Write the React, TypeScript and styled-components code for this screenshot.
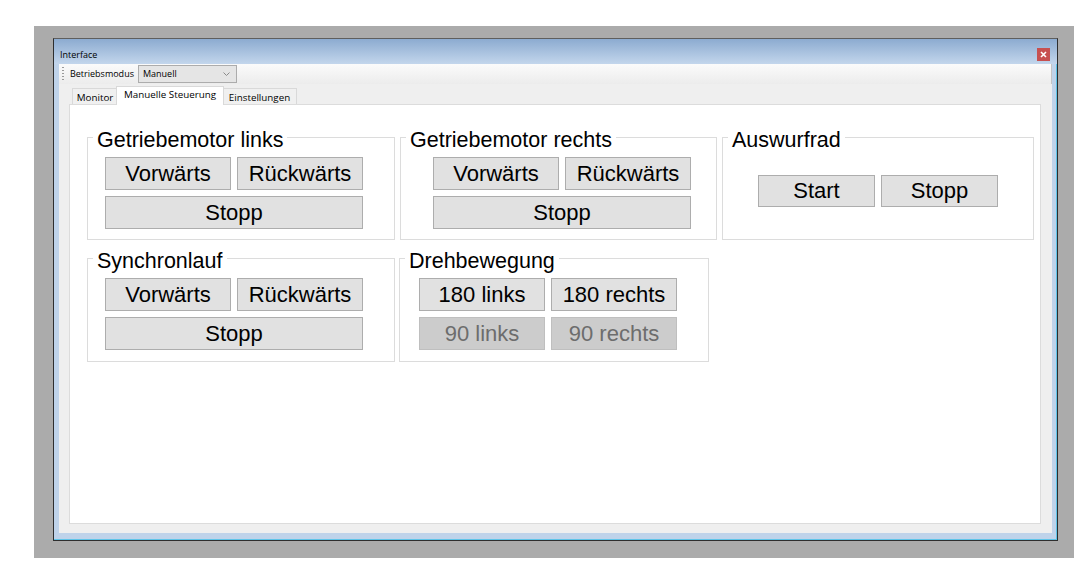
import React from "react";
import styled, { createGlobalStyle } from "styled-components";

const GlobalStyle = createGlobalStyle`
  html, body { margin: 0; padding: 0; background: #ffffff; }
  body { font-family: "Liberation Sans", Arial, sans-serif; }
  *, *::before, *::after { box-sizing: border-box; }
`;

const Stage = styled.div`
  margin: 26px 0 0 34px;
  width: 1040px;
  height: 532px;
  background: #ababab;
  padding: 12px 0 0 19px;
`;

const Window = styled.div`
  width: 1005px;
  height: 503px;
  border: 1px solid #2e2e2e;
  border-top-color: #5e5e5e;
  display: flex;
  flex-direction: column;
  background: #bfd3ea;
  box-shadow: inset -1px -1px 0 #5ec4e8;
`;

const TitleBar = styled.div`
  flex: none;
  height: 25px;
  display: flex;
  justify-content: space-between;
  align-items: flex-start;
  padding: 0 7px 0 6px;
  background: linear-gradient(#8cabd0, #c3d6ec);
`;

const TitleText = styled.span`
  margin-top: 10px;
  font-family: "Open Sans", "Liberation Sans", sans-serif;
  font-size: 9px;
  line-height: 12px;
  color: #000;
`;

const CloseBox = styled.div`
  margin-top: 9px;
  width: 13px;
  height: 13px;
  background: #c75050;
  display: flex;
  align-items: center;
  justify-content: center;
`;

const Frame = styled.div`
  flex: 1;
  display: flex;
  padding: 0 5px 7px 5px;
`;

const Client = styled.div`
  flex: 1;
  display: flex;
  flex-direction: column;
  background: #efefef;
`;

const Toolbar = styled.div`
  flex: none;
  height: 20px;
  display: flex;
  align-items: center;
  background: linear-gradient(#fbfbfb, #ececec);
  border-right: 1px solid #c4c4c4;
  font-family: "Open Sans", "Liberation Sans", sans-serif;
  font-size: 9px;
  color: #000;
`;

const Grip = styled.div`
  width: 2px;
  height: 14px;
  margin-left: 3px;
  background: repeating-linear-gradient(to bottom, #9a9a9a 0 1px, transparent 1px 3px);
`;

const ToolLabel = styled.span`
  margin-left: 6px;
  line-height: 12px;
`;

const Combo = styled.div`
  margin-left: 4px;
  width: 99px;
  height: 18px;
  background: #e5e5e5;
  border: 1px solid #acacac;
  display: flex;
  align-items: center;
  justify-content: space-between;
  padding: 0 6px 0 4px;
  line-height: 12px;
`;

const TabArea = styled.div`
  flex: 1;
  display: flex;
  flex-direction: column;
  padding: 2px 11px 9px 10px;
`;

const TabStrip = styled.div`
  flex: none;
  height: 18px;
  display: flex;
  align-items: flex-end;
  padding-left: 3px;
`;

const Tab = styled.div<{ $w: number; $active?: boolean }>`
  position: relative;
  width: ${(p) => p.$w}px;
  height: ${(p) => (p.$active ? 19 : 16)}px;
  margin: ${(p) => (p.$active ? "0 -2px -1px -2px" : "0")};
  z-index: ${(p) => (p.$active ? 1 : 0)};
  padding-top: ${(p) => (p.$active ? 1 : 2)}px;
  border: 1px solid #d9d9d9;
  border-bottom: none;
  background: ${(p) => (p.$active ? "#ffffff" : "#f0f0f0")};
  text-align: center;
  font-family: "Open Sans", "Liberation Sans", sans-serif;
  font-size: 9.8px;
  line-height: 13px;
  color: #000;
  white-space: nowrap;
`;

const Page = styled.div`
  flex: 1;
  background: #ffffff;
  border: 1px solid #dcdcdc;
  padding: 32px 0 0 17px;
  display: flex;
  flex-direction: column;
`;

const Row = styled.div<{ $gap: number; $top?: number }>`
  display: flex;
  gap: ${(p) => p.$gap}px;
  margin-top: ${(p) => p.$top ?? 0}px;
`;

const Group = styled.div<{ $w: number; $h: number }>`
  width: ${(p) => p.$w}px;
  height: ${(p) => p.$h}px;
  border: 1px solid #dcdcdc;
  display: flex;
  flex-direction: column;
  align-items: flex-start;
`;

const GroupTitle = styled.span`
  margin: -10px 0 0 5px;
  padding: 0 4px;
  background: #ffffff;
  font-size: 21.5px;
  line-height: 24px;
  color: #000;
  white-space: nowrap;
`;

const ButtonGrid = styled.div<{ $left: number; $top: number; $bw: number; $bh: number }>`
  display: grid;
  grid-template-columns: repeat(2, ${(p) => p.$bw}px);
  grid-auto-rows: ${(p) => p.$bh}px;
  gap: 6px;
  margin: ${(p) => p.$top}px 0 0 ${(p) => p.$left}px;
`;

const Button = styled.button<{ $wide?: boolean }>`
  grid-column: ${(p) => (p.$wide ? "1 / -1" : "auto")};
  margin: 0;
  padding: 0;
  background: #e1e1e1;
  border: 1px solid #adadad;
  font-family: "Liberation Sans", Arial, sans-serif;
  font-size: 22px;
  color: #000;
  &:disabled {
    background: #cccccc;
    border-color: #bfbfbf;
    color: #6d6d6d;
  }
`;

const Chevron = () => (
  <svg width="7" height="4" viewBox="0 0 7 4">
    <polyline points="0.5,0.5 3.5,3.5 6.5,0.5" fill="none" stroke="#8a8a8a" strokeWidth="1" />
  </svg>
);

const CloseIcon = () => (
  <svg width="7" height="7" viewBox="0 0 7 7">
    <path d="M1 1 L6 6 M6 1 L1 6" stroke="#ffffff" strokeWidth="1.6" />
  </svg>
);

const MotorGroup = ({ title, w, left }: { title: string; w: number; left: number }) => (
  <Group $w={w} $h={103}>
    <GroupTitle>{title}</GroupTitle>
    <ButtonGrid $left={left} $top={5} $bw={126} $bh={33}>
      <Button>Vorwärts</Button>
      <Button>Rückwärts</Button>
      <Button $wide>Stopp</Button>
    </ButtonGrid>
  </Group>
);

export default function App() {
  return (
    <>
      <GlobalStyle />
      <Stage>
        <Window>
          <TitleBar>
            <TitleText>Interface</TitleText>
            <CloseBox>
              <CloseIcon />
            </CloseBox>
          </TitleBar>
          <Frame>
            <Client>
              <Toolbar>
                <Grip />
                <ToolLabel>Betriebsmodus</ToolLabel>
                <Combo>
                  <span>Manuell</span>
                  <Chevron />
                </Combo>
              </Toolbar>
              <TabArea>
                <TabStrip>
                  <Tab $w={46}>Monitor</Tab>
                  <Tab $w={108} $active>
                    Manuelle Steuerung
                  </Tab>
                  <Tab $w={75}>Einstellungen</Tab>
                </TabStrip>
                <Page>
                  <Row $gap={5}>
                    <MotorGroup title="Getriebemotor links" w={308} left={17} />
                    <MotorGroup title="Getriebemotor rechts" w={317} left={32} />
                    <Group $w={312} $h={103}>
                      <GroupTitle>Auswurfrad</GroupTitle>
                      <ButtonGrid $left={35} $top={23} $bw={117} $bh={32}>
                        <Button>Start</Button>
                        <Button>Stopp</Button>
                      </ButtonGrid>
                    </Group>
                  </Row>
                  <Row $gap={4} $top={18}>
                    <Group $w={308} $h={104}>
                      <GroupTitle>Synchronlauf</GroupTitle>
                      <ButtonGrid $left={17} $top={5} $bw={126} $bh={33}>
                        <Button>Vorwärts</Button>
                        <Button>Rückwärts</Button>
                        <Button $wide>Stopp</Button>
                      </ButtonGrid>
                    </Group>
                    <Group $w={310} $h={104}>
                      <GroupTitle>Drehbewegung</GroupTitle>
                      <ButtonGrid $left={19} $top={5} $bw={126} $bh={33}>
                        <Button>180 links</Button>
                        <Button>180 rechts</Button>
                        <Button disabled>90 links</Button>
                        <Button disabled>90 rechts</Button>
                      </ButtonGrid>
                    </Group>
                  </Row>
                </Page>
              </TabArea>
            </Client>
          </Frame>
        </Window>
      </Stage>
    </>
  );
}
